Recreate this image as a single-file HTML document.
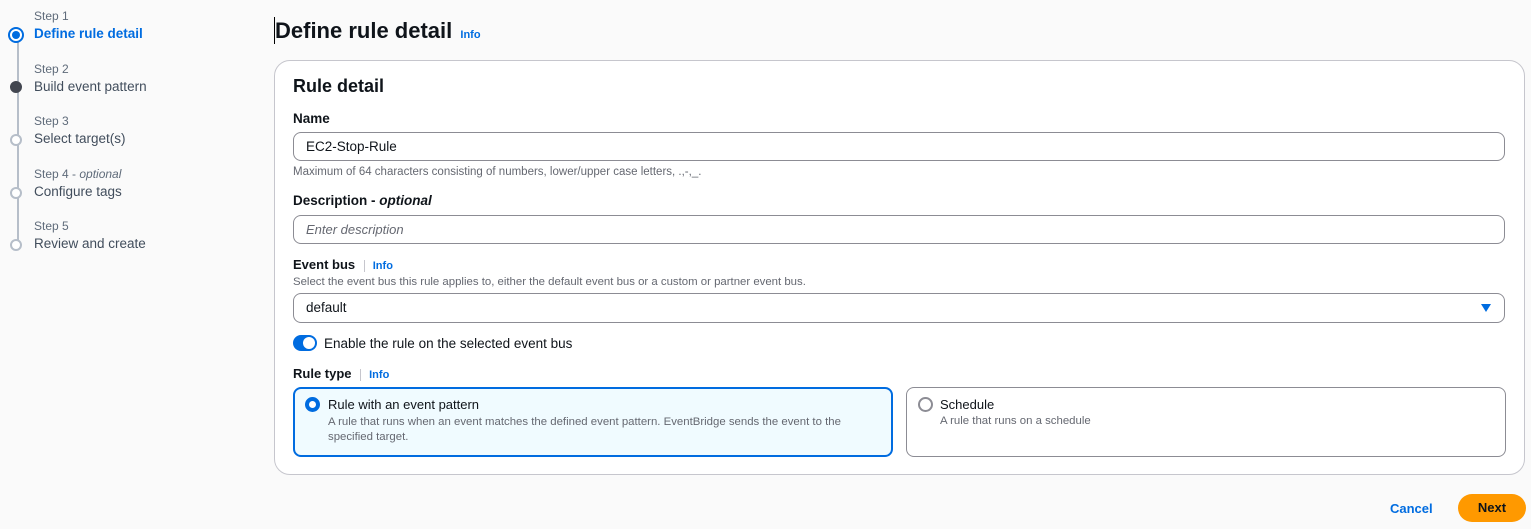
<!DOCTYPE html>
<html><head><style>
*{box-sizing:border-box;margin:0;padding:0}
body{width:1531px;height:529px;background:#fafafa;font-family:"Liberation Sans",sans-serif;color:#0f141a;position:relative;overflow:hidden}
.a{position:absolute;white-space:nowrap}
.step{font-size:12px;color:#5f6b7a}
.lab{font-size:13.5px;color:#414d5c}
.dot{position:absolute;width:12px;height:12px;border-radius:50%;border:2px solid #b6bec9;background:#fff;left:10px}
.info{color:#006ce0;font-size:11px;font-weight:bold}
.in{position:absolute;left:293px;width:1212px;height:29px;border:1px solid #8c8c94;border-radius:8px;background:#fff;font-size:13.5px;padding:6px 12px}
.b{font-weight:bold;font-size:13.5px}
.sm{font-size:11.4px;color:#656871}
</style></head><body>
<div style="position:absolute;left:17px;top:40px;width:2px;height:200px;background:#b6bec9"></div>
<div class="a step" style="left:34px;top:9px">Step 1</div>
<div class="a" style="left:34px;top:26px;font-size:13.5px;font-weight:bold;color:#006ce0">Define rule detail</div>
<div style="position:absolute;left:8px;top:27px;width:16px;height:16px;border-radius:50%;border:2px solid #006ce0;background:#fff"></div>
<div style="position:absolute;left:12px;top:31px;width:8px;height:8px;border-radius:50%;background:#006ce0"></div>
<div class="a step" style="left:34px;top:62px">Step 2</div>
<div class="a lab" style="left:34px;top:79px">Build event pattern</div>
<div class="dot" style="top:81px;background:#424650;border-color:#424650"></div>
<div class="a step" style="left:34px;top:114px">Step 3</div>
<div class="a lab" style="left:34px;top:131px">Select target(s)</div>
<div class="dot" style="top:134px"></div>
<div class="a step" style="left:34px;top:167px">Step 4 - <i>optional</i></div>
<div class="a lab" style="left:34px;top:184px">Configure tags</div>
<div class="dot" style="top:187px"></div>
<div class="a step" style="left:34px;top:219px">Step 5</div>
<div class="a lab" style="left:34px;top:236px">Review and create</div>
<div class="dot" style="top:239px"></div>

<div style="position:absolute;left:274px;top:17px;width:1px;height:27px;background:#000"></div>
<div class="a" style="left:275px;top:18px;font-size:22px;font-weight:bold">Define rule detail <span class="info" style="margin-left:2px">Info</span></div>

<div style="position:absolute;left:274px;top:60px;width:1251px;height:415px;border:1px solid #c6c6cd;border-radius:16px;background:#fff"></div>
<div class="a" style="left:293px;top:76px;font-size:18px;font-weight:bold">Rule detail</div>
<div class="a b" style="left:293px;top:111px">Name</div>
<div class="in" style="top:132px">EC2-Stop-Rule</div>
<div class="a sm" style="left:293px;top:166px;font-size:11.5px">Maximum of 64 characters consisting of numbers, lower/upper case letters, .,-,_.</div>
<div class="a b" style="left:293px;top:193px">Description - <i>optional</i></div>
<div class="in" style="top:215px;color:#656871;font-style:italic;font-size:13px">Enter description</div>
<div class="a b" style="left:293px;top:257px;font-size:13px">Event bus <span style="border-left:1px solid #c6c6cd;margin-left:5px;padding-left:8px" class="info">Info</span></div>
<div class="a sm" style="left:293px;top:276px">Select the event bus this rule applies to, either the default event bus or a custom or partner event bus.</div>
<div class="in" style="top:293px;height:30px">default</div>
<div style="position:absolute;left:1481px;top:304px;width:0;height:0;border-left:5px solid transparent;border-right:5px solid transparent;border-top:8px solid #006ce0"></div>
<div style="position:absolute;left:293px;top:335px;width:24px;height:16px;border-radius:8px;background:#006ce0"></div>
<div style="position:absolute;left:303px;top:337px;width:12px;height:12px;border-radius:50%;background:#fff"></div>
<div class="a" style="left:324px;top:336px;font-size:13.5px">Enable the rule on the selected event bus</div>
<div class="a b" style="left:293px;top:366px;font-size:13px">Rule type <span style="border-left:1px solid #c6c6cd;margin-left:5px;padding-left:8px" class="info">Info</span></div>
<div style="position:absolute;left:293px;top:387px;width:600px;height:70px;border:2px solid #006ce0;border-radius:8px;background:#f0fbff"></div>
<div style="position:absolute;left:305px;top:397px;width:15px;height:15px;border-radius:50%;border:4px solid #006ce0;background:#fff"></div>
<div class="a" style="left:328px;top:397px;font-size:13px">Rule with an event pattern</div>
<div class="a sm" style="left:328px;top:415px;line-height:15px">A rule that runs when an event matches the defined event pattern. EventBridge sends the event to the<br>specified target.</div>
<div style="position:absolute;left:906px;top:387px;width:600px;height:70px;border:1px solid #8c8c94;border-radius:8px;background:#fff"></div>
<div style="position:absolute;left:918px;top:397px;width:15px;height:15px;border-radius:50%;border:2px solid #8c8c94;background:#fff"></div>
<div class="a" style="left:940px;top:397px;font-size:13px">Schedule</div>
<div class="a sm" style="left:940px;top:415px">A rule that runs on a schedule</div>

<div class="a" style="left:1390px;top:501px;font-size:13px;font-weight:bold;color:#006ce0">Cancel</div>
<div style="position:absolute;left:1458px;top:494px;width:68px;height:28px;border-radius:14px;background:#ff9900;font-size:13px;font-weight:bold;text-align:center;line-height:28px">Next</div>
</body></html>
